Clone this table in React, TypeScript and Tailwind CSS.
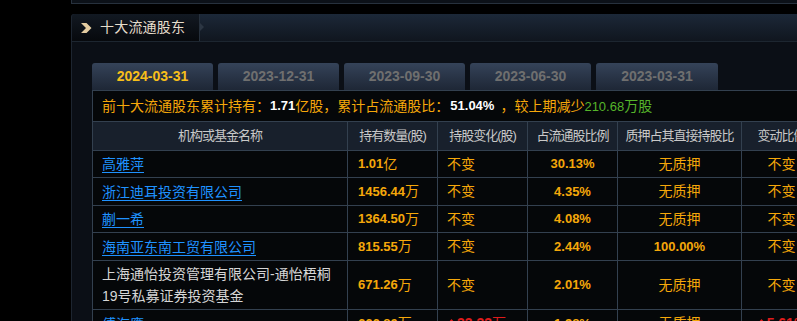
import React from 'react';

const ORANGE = 'text-[#f5a70a]';

type Row = {
    name: string;
    link: boolean;
    amount: string;
    unit: string;
    change: React.ReactNode;
    ratio: string;
    pledge: string;
    delta: React.ReactNode;
    h: string;
};

const Up = () => (
    <svg width="9" height="8" viewBox="0 0 9 8" className="inline-block mr-[1px] -mt-[2px]">
        <path d="M4.5 0 L9 5 L6 5 L6 8 L3 8 L3 5 L0 5 Z" fill="#e01b1b" />
    </svg>
);

const rows: Row[] = [
    { name: '高雅萍', link: true, amount: '1.01', unit: '亿', change: '不变', ratio: '30.13%', pledge: '无质押', delta: '不变', h: 'h-[27px]' },
    { name: '浙江迪耳投资有限公司', link: true, amount: '1456.44', unit: '万', change: '不变', ratio: '4.35%', pledge: '无质押', delta: '不变', h: 'h-[28px]' },
    { name: '蒯一希', link: true, amount: '1364.50', unit: '万', change: '不变', ratio: '4.08%', pledge: '无质押', delta: '不变', h: 'h-[27px]' },
    { name: '海南亚东南工贸有限公司', link: true, amount: '815.55', unit: '万', change: '不变', ratio: '2.44%', pledge: '100.00%', delta: '不变', h: 'h-[28px]' },
    { name: '上海通怡投资管理有限公司-通怡梧桐19号私募证券投资基金', link: false, amount: '671.26', unit: '万', change: '不变', ratio: '2.01%', pledge: '无质押', delta: '不变', h: 'h-[49px]' },
    {
        name: '傅海鹰', link: true, amount: '666.80', unit: '万',
        change: <span className="text-[#e01b1b]"><Up /><span className="font-bold">33.33</span>万</span>,
        ratio: '1.98%', pledge: '无质押',
        delta: <span className="text-[#e01b1b]"><Up /><span className="font-bold">5.61%</span></span>,
        h: 'h-[28px]',
    },
];

const dates = ['2024-03-31', '2023-12-31', '2023-09-30', '2023-06-30', '2023-03-31'];

const cols = ['w-[255px]', 'w-[90px]', 'w-[90px]', 'w-[90px]', 'w-[124px]', 'w-[80px]'];

export default function App() {
    return (
        <div
            className="w-[797px] h-[321px] overflow-hidden bg-black relative"
            style={{ fontFamily: "'Liberation Sans', 'Noto Sans CJK SC', sans-serif" }}
        >
            {/* previous panel stub */}
            <div className="ml-[71px] w-[760px] h-[4px] bg-[#0c1118] border-l border-b border-[#27313d]" />

            <div className="mt-[10px] ml-[71px] w-[780px] bg-[#0b0f16] border-l border-[#1d2530] rounded-tl-[3px]">
                {/* header */}
                <div className="flex h-[28px] bg-gradient-to-b from-[#1c2838] to-[#10161f] border-b border-[#1d2630] rounded-tl-[3px]">
                    <div className="relative w-[128px] flex items-center bg-gradient-to-b from-[#121922] to-[#07090d] border-r border-[#26303c] rounded-tl-[3px]">
                        <svg width="11" height="10" viewBox="0 0 11 10" className="ml-[9px]">
                            <path d="M0 0 L5.5 0 L10.5 5 L5.5 10 L0 10 L5 5 Z" fill="#e3cba0" />
                        </svg>
                        <span className="ml-[8px] text-[14px] text-[#e6ddcc] tracking-[0.2px]">十大流通股东</span>
                        <div className="absolute right-[-5px] top-[9px] w-0 h-0 border-y-[4px] border-y-transparent border-l-[4px] border-l-[#2c3643]" />
                    </div>
                </div>

                {/* body */}
                <div className="pt-[21px] pl-[20px]">
                    <div className="flex gap-[5px] h-[27px]">
                        {dates.map((d, i) => (
                            <div
                                key={d}
                                className={`flex items-center justify-center ${i === 4 ? 'w-[122px]' : 'w-[121px]'} rounded-t-[3px] bg-gradient-to-b from-[#354359] to-[#1e2736] text-[14px] font-bold ${i === 0 ? 'text-[#f7bf1a]' : 'text-[#6f6f6f]'}`}
                            >
                                {d}
                            </div>
                        ))}
                    </div>

                    <div className="border-t border-l border-[#33404f] bg-[#050709]">
                        {/* summary */}
                        <div className={`h-[30px] flex items-center pl-[9px] text-[14px] ${ORANGE}`}>
                            前十大流通股东累计持有：
                            <span className="text-white font-bold text-[13px]">1.71</span>
                            亿股，累计占流通股比：
                            <span className="text-white font-bold text-[13px] ml-[1px]">51.04%</span>
                            <span className="ml-[6px]">，较上期减少</span>
                            <span className="text-[#55b52a]"><span className="text-[13px]">210.68</span>万股</span>
                        </div>

                        {/* table header */}
                        <div className="flex h-[29px] bg-[#18202c] border-t border-[#33404f] text-[13px] tracking-[-1px] text-[#c8c8c8]">
                            {['机构或基金名称', '持有数量(股)', '持股变化(股)', '占流通股比例', '质押占其直接持股比', '变动比例'].map((t, i) => (
                                <div key={t} className={`${cols[i]} shrink-0 flex items-center justify-center border-r border-[#33404f] whitespace-nowrap`}>
                                    {t}
                                </div>
                            ))}
                        </div>

                        {rows.map((r) => (
                            <div key={r.name} className={`flex ${r.h} border-t border-[#33404f] text-[14px]`}>
                                <div className={`${cols[0]} shrink-0 flex items-center pl-[9px] pr-[12px] border-r border-[#33404f] leading-[22px]`}>
                                    {r.link ? (
                                        <span className="text-[#1f92ff] underline underline-offset-[3px]">{r.name}</span>
                                    ) : (
                                        <span className="text-[#d6d6d6]">{r.name}</span>
                                    )}
                                </div>
                                <div className={`${cols[1]} shrink-0 flex items-center pl-[10px] border-r border-[#33404f] ${ORANGE}`}>
                                    <span className="font-bold text-[13px]">{r.amount}</span>
                                    {r.unit}
                                </div>
                                <div className={`${cols[2]} shrink-0 flex items-center pl-[9px] border-r border-[#33404f] ${ORANGE}`}>
                                    {r.change}
                                </div>
                                <div className={`${cols[3]} shrink-0 flex items-center justify-center border-r border-[#33404f] ${ORANGE} font-bold text-[13px]`}>
                                    {r.ratio}
                                </div>
                                <div className={`${cols[4]} shrink-0 flex items-center justify-center border-r border-[#33404f] ${ORANGE} ${r.pledge.includes('%') ? 'font-bold text-[13px]' : ''}`}>
                                    {r.pledge}
                                </div>
                                <div className={`${cols[5]} shrink-0 flex items-center justify-center border-r border-[#33404f] ${ORANGE}`}>
                                    {r.delta}
                                </div>
                            </div>
                        ))}
                    </div>
                </div>
            </div>
        </div>
    );
}
